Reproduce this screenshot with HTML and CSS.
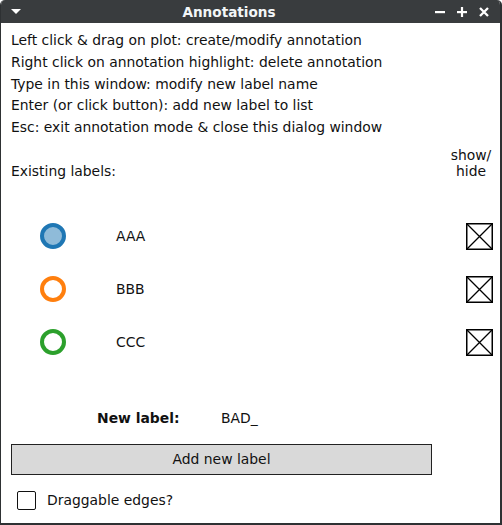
FILE: index.html
```html
<!DOCTYPE html>
<html>
<head>
<meta charset="utf-8">
<link rel="stylesheet" href="styles.css">
</head>
<body>
<div class="window">
  <div class="titlebar">
    <span class="menu-btn"><svg width="10" height="6" viewBox="0 0 10 6"><polygon points="0,0 10,0 5,5" fill="#fff"/></svg></span>
    <span class="title">Annotations</span>
    <span class="ctrls">
      <svg width="10" height="10" viewBox="0 0 10 10"><rect x="0" y="4" width="10" height="2.2" fill="#fff"/></svg>
      <svg width="10" height="10" viewBox="0 0 10 10"><rect x="0" y="4" width="10" height="2.2" fill="#fff"/><rect x="3.9" y="0" width="2.2" height="10" fill="#fff"/></svg>
      <svg width="10" height="10" viewBox="0 0 10 10"><path d="M1 1 L9 9 M9 1 L1 9" stroke="#fff" stroke-width="2.3"/></svg>
    </span>
  </div>
  <div class="content">
    <div class="help">
      <div>Left click &amp; drag on plot: create/modify annotation</div>
      <div>Right click on annotation highlight: delete annotation</div>
      <div>Type in this window: modify new label name</div>
      <div>Enter (or click button): add new label to list</div>
      <div>Esc: exit annotation mode &amp; close this dialog window</div>
    </div>
    <div class="header">
      <span class="existing">Existing labels:</span>
      <span class="showhide">show/<br>hide</span>
    </div>
    <div class="rows">
      <div class="row">
        <span class="dot blue"></span><span class="lbl">AAA</span>
        <span class="xbox"><svg width="27" height="27" viewBox="0 0 27 27"><rect x="0.75" y="0.75" width="25.5" height="25.5" fill="#fff" stroke="#000" stroke-width="1.5"/><path d="M1 1 L26 26 M26 1 L1 26" stroke="#000" stroke-width="1.3"/></svg></span>
      </div>
      <div class="row">
        <span class="dot orange"></span><span class="lbl">BBB</span>
        <span class="xbox"><svg width="27" height="27" viewBox="0 0 27 27"><rect x="0.75" y="0.75" width="25.5" height="25.5" fill="#fff" stroke="#000" stroke-width="1.5"/><path d="M1 1 L26 26 M26 1 L1 26" stroke="#000" stroke-width="1.3"/></svg></span>
      </div>
      <div class="row">
        <span class="dot green"></span><span class="lbl">CCC</span>
        <span class="xbox"><svg width="27" height="27" viewBox="0 0 27 27"><rect x="0.75" y="0.75" width="25.5" height="25.5" fill="#fff" stroke="#000" stroke-width="1.5"/><path d="M1 1 L26 26 M26 1 L1 26" stroke="#000" stroke-width="1.3"/></svg></span>
      </div>
    </div>
    <div class="newlabel">
      <span class="nl-key">New label:</span>
      <span class="nl-val">BAD_</span>
    </div>
    <button class="addbtn">Add new label</button>
    <label class="drag">
      <span class="cb"></span>
      <span>Draggable edges?</span>
    </label>
  </div>
</div>
</body>
</html>
```

FILE: styles.css
```css
html, body {
  margin: 0;
  padding: 0;
  background: #fff;
}
body {
  font-family: "DejaVu Sans", sans-serif;
  font-size: 13.9px;
  color: #000;
}
.window {
  width: 502px;
  height: 525px;
  box-sizing: border-box;
  border-left: 1px solid #2e3133;
  border-right: 2px solid #2e3133;
  border-bottom: 2px solid #2e3133;
  border-radius: 5px 5px 0 0;
  overflow: hidden;
  background: #fff;
  display: flex;
  flex-direction: column;
}
.titlebar {
  height: 23px;
  flex: none;
  background: #393c3e;
  color: #fff;
  display: flex;
  align-items: center;
  box-sizing: border-box;
  padding-top: 1px;
}
.menu-btn {
  width: 10px;
  margin-left: 10px;
  display: flex;
  align-items: center;
}
.title {
  flex: 1;
  text-align: center;
  font-weight: bold;
  font-size: 13.6px;
  color: #f2f6f8;
  margin-left: 2px;
}
.ctrls {
  display: flex;
  gap: 12px;
  margin-right: 11px;
  align-items: center;
}
.ctrls svg { display: block; }
.content {
  flex: 1;
  display: flex;
  flex-direction: column;
  padding: 7px 0 0 10px;
  color: #111;
}
.help div {
  line-height: 21.75px;
  white-space: nowrap;
}
.header {
  display: flex;
  align-items: flex-end;
  margin-top: 7px;
  height: 34px;
}
.existing {
  flex: 1;
  line-height: 18px;
}
.showhide {
  width: 50px;
  text-align: center;
  line-height: 16px;
  margin-right: 4px;
  position: relative;
  top: -1px;
}
.rows {
  margin-top: 30px;
  display: flex;
  flex-direction: column;
}
.row {
  height: 53px;
  display: flex;
  align-items: center;
}
.dot {
  width: 18px;
  height: 18px;
  border-radius: 50%;
  border: 4px solid;
  margin-left: 29px;
  flex: none;
}
.dot.blue { border-color: #1f77b4; background: #8fbbd9; }
.dot.orange { border-color: #ff7f0e; background: #fff; }
.dot.green { border-color: #2ca02c; background: #fff; }
.lbl {
  margin-left: 50px;
  flex: 1;
}
.xbox {
  margin-right: 7px;
  display: flex;
}
.newlabel {
  margin-top: 40px;
  display: flex;
  line-height: 18px;
}
.nl-key {
  font-weight: bold;
  margin-left: 86px;
  width: 124px;
}
.addbtn {
  margin-top: 17px;
  width: 421px;
  height: 31px;
  box-sizing: border-box;
  background: #d9d9d9;
  border: 1px solid #222;
  font-family: "DejaVu Sans", sans-serif;
  font-size: 13.9px;
  color: #111;
  padding: 0;
  border-radius: 0;
}
.drag {
  margin-top: 16px;
  display: flex;
  align-items: center;
  margin-left: 6px;
}
.cb {
  width: 19px;
  height: 19px;
  box-sizing: border-box;
  border: 1.5px solid #111;
  border-radius: 2px;
  margin-right: 11px;
}
```
